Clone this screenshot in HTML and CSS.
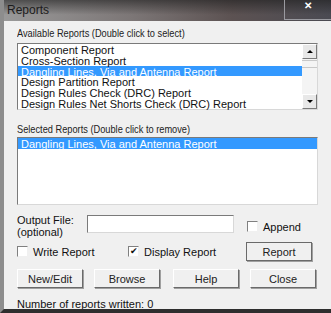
FILE: index.html
```html
<!DOCTYPE html>
<html lang="en">

<head>
  <meta charset="UTF-8">
  <title>Reports</title>
  <link rel="stylesheet" href="styles.css">
</head>

<body>
  <div class="window">
    <div class="titlebar">
      <span class="title">Reports</span>
      <span class="close-btn">✕</span>
    </div>

    <div class="content">
      <div class="label first"><span>Available Reports (Double click to select)</span></div>
      <div class="listbox available">
        <ul class="items">
          <li>Component Report</li>
          <li>Cross-Section Report</li>
          <li class="selected">Dangling Lines, Via and Antenna Report</li>
          <li>Design Partition Report</li>
          <li>Design Rules Check (DRC) Report</li>
          <li>Design Rules Net Shorts Check (DRC) Report</li>
        </ul>
        <div class="scrollbar">
          <span class="arrow up"></span>
          <span class="thumb"></span>
          <span class="arrow down"></span>
        </div>
      </div>

      <div class="label second"><span>Selected Reports (Double click to remove)</span></div>
      <div class="listbox chosen">
        <ul class="items">
          <li class="selected">Dangling Lines, Via and Antenna Report</li>
        </ul>
      </div>

      <div class="output-row">
        <div class="output-label">Output File:<br>(optional)</div>
        <div class="textbox"></div>
        <label class="check append"><span class="box"></span>Append</label>
      </div>

      <div class="option-row">
        <label class="check write"><span class="box"></span>Write Report</label>
        <label class="check display"><span class="box checked"></span>Display Report</label>
        <button class="btn default">Report</button>
      </div>

      <div class="button-row">
        <button class="btn">New/Edit</button>
        <button class="btn">Browse</button>
        <button class="btn">Help</button>
        <button class="btn">Close</button>
      </div>

      <div class="status">Number of reports written: 0</div>
    </div>
  </div>
</body>

</html>
```

FILE: styles.css
```css
body {
  margin: 0;
  padding: 0;
  background: #f0f0f0;
  font-family: "Liberation Sans", Arial, sans-serif;
  font-size: 11px;
  color: #111;
}

.window {
  width: 331px;
  height: 313px;
  box-sizing: border-box;
  border-left: 4px solid #8d8d8d;
  border-bottom: 4px solid #2e2e2e;
  background: #f0f0f0;
  overflow: hidden;
}

.titlebar {
  height: 21px;
  display: flex;
  align-items: flex-start;
  justify-content: space-between;
  margin-left: -4px;
  background: linear-gradient(to bottom, rgba(30, 30, 30, 0.6), rgba(0, 0, 0, 0) 70%),
    linear-gradient(to right, #9a9a9a, #7c7676 40%, #5c5252 70%, #4a4a52);
}

.title {
  padding-left: 7px;
  padding-top: 3px;
  font-size: 12px;
  color: #1c1c1c;
}

.close-btn {
  width: 47px;
  height: 20px;
  box-sizing: border-box;
  border-left: 1px solid #9a9aa0;
  border-bottom: 1px solid #9a9aa0;
  color: #fff;
  font-size: 10px;
  font-weight: bold;
  text-align: center;
  line-height: 12px;
}

.content {
  padding-left: 13px;
}

.label {
  line-height: 13px;
  color: #222;
  white-space: nowrap;
}

.label span {
  display: inline-block;
  transform: scaleX(0.84);
  transform-origin: left center;
}

.label.first {
  margin-top: 6px;
}

.label.second {
  margin-top: 13px;
}

.listbox {
  width: 301px;
  box-sizing: border-box;
  border: 1px solid #7a7a7a;
  border-right-color: #d8d8d8;
  border-bottom-color: #d8d8d8;
  background: #fff;
  display: flex;
}

.listbox.available {
  height: 67px;
  margin-top: 3px;
}

.listbox.chosen {
  height: 68px;
  margin-top: 1px;
}

.items {
  list-style: none;
  margin: 0;
  padding: 0;
  flex: 1;
}

.items li {
  height: 10.8px;
  line-height: 12px;
  padding-left: 3px;
  white-space: nowrap;
}

.items li.selected {
  background: #3399ff;
  color: #fff;
}

.scrollbar {
  width: 15px;
  display: flex;
  flex-direction: column;
  background: #f4f4f4;
}

.arrow {
  height: 15px;
  box-sizing: border-box;
  border: 1px solid #fff;
  border-right-color: #7a7a7a;
  border-bottom-color: #7a7a7a;
  background: #e8e8e8;
  display: flex;
  align-items: center;
  justify-content: center;
}

.arrow::after {
  content: "";
  border-left: 3px solid transparent;
  border-right: 3px solid transparent;
}

.arrow.up::after {
  border-bottom: 3px solid #000;
}

.arrow.down::after {
  border-top: 3px solid #000;
}

.thumb {
  height: 6px;
  margin-top: 1px;
  border-top: 1px solid #c8c8c8;
  border-bottom: 1px solid #c8c8c8;
  flex: none;
}

.scrollbar .down {
  margin-top: auto;
}

.output-row {
  display: flex;
  align-items: center;
  margin-top: 9px;
  height: 19px;
}

.output-label {
  width: 70px;
  line-height: 12px;
  padding-top: 4px;
}

.textbox {
  width: 147px;
  height: 18px;
  box-sizing: border-box;
  border: 1px solid #7a7a7a;
  border-right-color: #d8d8d8;
  border-bottom-color: #d8d8d8;
  background: #fff;
}

.check {
  display: flex;
  align-items: center;
}

.box {
  width: 11px;
  height: 11px;
  box-sizing: border-box;
  border: 1px solid #808080;
  border-right-color: #f0f0f0;
  border-bottom-color: #f0f0f0;
  background: #fff;
  margin-right: 5px;
  font-size: 9px;
  line-height: 9px;
  text-align: center;
}

.box.checked::after {
  content: "✔";
}

.append {
  margin-left: 13px;
  margin-top: 6px;
}

.option-row {
  display: flex;
  align-items: center;
  margin-top: 9px;
  height: 19px;
}

.write {
  width: 111px;
}

.display {
  width: 118px;
}

.btn {
  width: 66px;
  height: 19px;
  padding: 0;
  box-sizing: border-box;
  font-family: inherit;
  font-size: 11px;
  color: #222;
  background: #f0f0f0;
  border: 1px solid #fff;
  border-right-color: #6a6a6a;
  border-bottom-color: #6a6a6a;
  box-shadow: 1px 1px 0 #a0a0a0;
}

.btn.default {
  border-color: #6a6a6a;
}

.button-row {
  display: flex;
  margin-top: 8px;
  gap: 11px;
}

.button-row .btn:nth-child(3) {
  margin-left: 2px;
}

.status {
  margin-top: 10px;
  line-height: 13px;
}
```
